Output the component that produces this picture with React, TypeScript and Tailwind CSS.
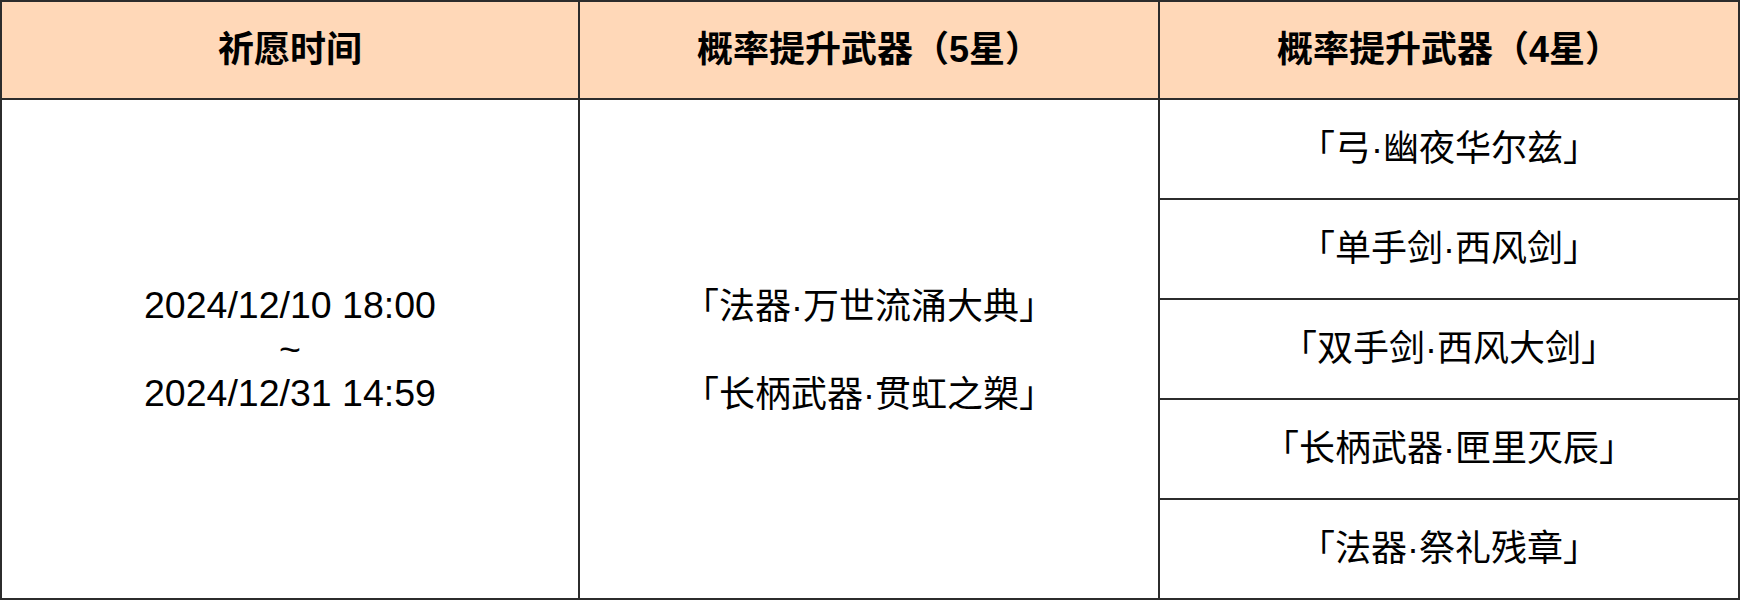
const weapons4 = [
  "「弓·幽夜华尔兹」",
  "「单手剑·西风剑」",
  "「双手剑·西风大剑」",
  "「长柄武器·匣里灭辰」",
  "「法器·祭礼残章」",
];

const font = "font-['Liberation_Sans','Noto_Sans_CJK_SC',sans-serif]";

export default function App() {
  return (
    <div
      className={`${font} grid w-[1740px] h-[600px] grid-cols-[576px_578px_578px] grid-rows-[96px_repeat(5,98px)] gap-[2px] bg-[#2c2c2c] p-[2px] text-[36px] leading-[44px] text-black`}
    >
      <div className="flex items-center justify-center bg-[#ffd8b8] font-bold">
        祈愿时间
      </div>
      <div className="flex items-center justify-center bg-[#ffd8b8] font-bold">
        概率提升武器（5星）
      </div>
      <div className="flex items-center justify-center bg-[#ffd8b8] font-bold">
        概率提升武器（4星）
      </div>

      <div className="row-span-5 flex flex-col items-center justify-center bg-white text-center text-[37.5px] leading-[44px]">
        <span>2024/12/10 18:00</span>
        <span>~</span>
        <span>2024/12/31 14:59</span>
      </div>
      <div className="row-span-5 flex flex-col items-center justify-center gap-[44px] bg-white pt-[4px] text-center">
        <span>「法器·万世流涌大典」</span>
        <span>「长柄武器·贯虹之槊」</span>
      </div>

      {weapons4.map((w, i) => (
        <div
          key={i}
          className={`flex items-center justify-center bg-white ${i === 0 ? "col-start-3 row-start-2" : "col-start-3"}`}
        >
          {w}
        </div>
      ))}
    </div>
  );
}
